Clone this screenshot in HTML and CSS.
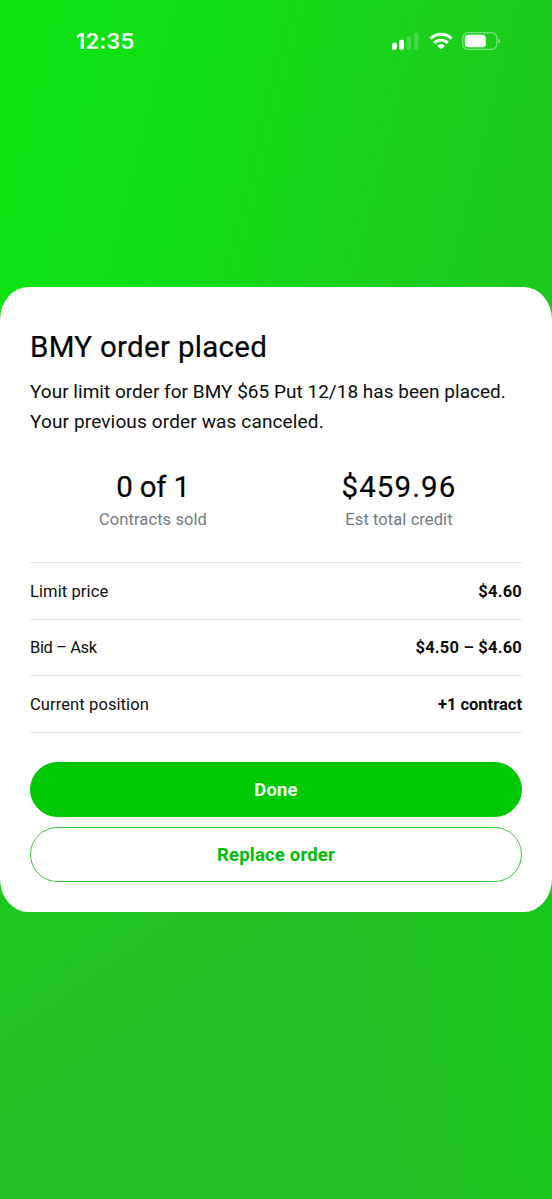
FILE: index.html
```
<!DOCTYPE html>
<html lang="en">
<head>
<meta charset="utf-8">
<title>Order placed</title>
<link rel="stylesheet" href="styles.css">
</head>
<body>
<div class="screen">
  <header class="status-bar">
    <span class="clock">12:35</span>
    <div class="indicators">
      <svg class="signal" width="28" height="18" viewBox="0 0 28 18" fill="#fff">
        <rect x="0" y="10.8" width="4.8" height="7" rx="1.6"/>
        <rect x="7.2" y="7.8" width="4.8" height="10" rx="1.6"/>
        <rect x="14.8" y="4.5" width="4.2" height="13.3" rx="1.3" opacity=".2"/>
        <rect x="22.2" y=".8" width="4.2" height="17" rx="1.3" opacity=".2"/>
      </svg>
      <svg class="wifi" width="24" height="18" viewBox="0 0 24 18">
        <g fill="none" stroke="#fff" stroke-width="3">
          <path d="M1.4 6.6a15.2 15.2 0 0 1 21.2 0"/>
          <path d="M5.2 10.9a9.8 9.8 0 0 1 13.6 0"/>
        </g>
        <path d="M12 17.6 8.7 14.4c-.4-.4-.3-.8.1-1.1a5 5 0 0 1 6.4 0c.4.3.5.7.1 1.1z" fill="#fff"/>
      </svg>
      <svg class="battery" width="39" height="18" viewBox="0 0 39 18">
        <rect x=".7" y=".7" width="34.2" height="16.6" rx="5.3" fill="none" stroke="#fff" stroke-opacity=".42" stroke-width="1.3"/>
        <rect x="2.8" y="2.8" width="21" height="12.4" rx="3.5" fill="#fff"/>
        <path d="M36.4 6.4c2.1.8 2.1 4.4 0 5.2z" fill="#fff" opacity=".5"/>
      </svg>
    </div>
  </header>

  <main class="card">
    <h1 class="title">BMY order placed</h1>
    <p class="message"><span class="line-one">Your limit order for BMY $65 Put 12/18 has been placed.</span><br><span class="line-two">Your previous order was canceled.</span></p>
    <section class="stats">
      <div class="stat"><div class="stat-value count">0 of 1</div><div class="stat-label">Contracts sold</div></div>
      <div class="stat"><div class="stat-value amount">$459.96</div><div class="stat-label">Est total credit</div></div>
    </section>
    <dl class="details">
      <div class="row"><dt>Limit price</dt><dd>$4.60</dd></div>
      <div class="row"><dt class="spread">Bid – Ask</dt><dd>$4.50 – $4.60</dd></div>
      <div class="row"><dt>Current position</dt><dd class="position">+1 contract</dd></div>
    </dl>
    <div class="actions">
      <button class="button primary">Done</button>
      <button class="button secondary">Replace order</button>
    </div>
  </main>
</div>
</body>
</html>
```

FILE: styles.css
```
* { box-sizing: border-box; }

body {
  margin: 0;
  font-family: Roboto, "Liberation Sans", sans-serif;
  color: #0b0d0c;
}

.screen {
  width: 552px;
  height: 1199px;
  overflow: hidden;
  background:
    linear-gradient(104deg, #0ee412 0%, #10e012 30%, #1bd01c 62%, #1dc51d 100%) 0 0 / 552px 600px no-repeat,
    linear-gradient(84deg, rgba(22, 202, 22, 0) 58%, #16ca16 100%) 0 600px / 552px 599px no-repeat,
    linear-gradient(145deg, #1dcc1e 20%, #24c027 58%, #26be2a 100%) 0 600px / 552px 599px no-repeat;
}

.status-bar {
  display: flex;
  justify-content: space-between;
  align-items: center;
  height: 287px;
  padding: 0 51px 206px 76px;
}

.clock {
  font: 600 22px/26px Inter, sans-serif;
  color: #f4fff4;
  letter-spacing: 0.1px;
}

.indicators { display: flex; align-items: center; }
.signal { margin-right: 9px; }
.wifi { margin-right: 9px; }
.indicators svg { display: block; }

.card {
  height: 625px;
  padding: 42px 30px 30px;
  background: #fff;
  border-radius: 28px / 33px;
}

.title {
  margin: 0;
  font-size: 29.5px;
  line-height: 37px;
  font-weight: 400;
  letter-spacing: 0.3px;
  color: #000;
  -webkit-text-stroke: 0.2px #000;
}

.message {
  margin: 11px 0 0;
  font-size: 19px;
  line-height: 30px;
  white-space: nowrap;
}

.line-one { letter-spacing: 0.02px; }
.line-two { letter-spacing: 0.14px; }

.stats {
  display: grid;
  grid-template-columns: 1fr 1fr;
  margin-top: 32px;
  height: 93px;
  text-align: center;
}

.stat-value {
  font-size: 29.5px;
  line-height: 36px;
  color: #000;
  -webkit-text-stroke: 0.2px #000;
}

.count { letter-spacing: -0.2px; }
.amount { letter-spacing: 1.1px; }

.stat-label {
  margin-top: 3px;
  font-size: 16.5px;
  line-height: 24px;
  letter-spacing: 0.08px;
  color: #747b80;
}

.details { margin: 0; border-top: 1px solid #e5e9e9; }

.row {
  display: flex;
  justify-content: space-between;
  align-items: center;
  height: 56.5px;
  padding-top: 1px;
  border-bottom: 1px solid #e3e8e8;
  font-size: 16.5px;
}

.row dt { letter-spacing: 0.1px; }
.row .spread { letter-spacing: -0.4px; }
.row dd { margin: 0; font-weight: 700; letter-spacing: 0.2px; }
.row .position { letter-spacing: 0; }

.actions {
  display: flex;
  flex-direction: column;
  gap: 10px;
  margin-top: 29px;
}

.button {
  width: 100%;
  height: 55px;
  padding: 2px 0 0;
  border: 1px solid #00c805;
  border-radius: 28px;
  font-family: inherit;
  font-size: 18.5px;
  font-weight: 700;
  letter-spacing: 0.2px;
}

.primary { background: #00c805; color: #eaffea; }
.secondary { background: #fff; color: #00bd08; border-color: #35c63b; }
```
